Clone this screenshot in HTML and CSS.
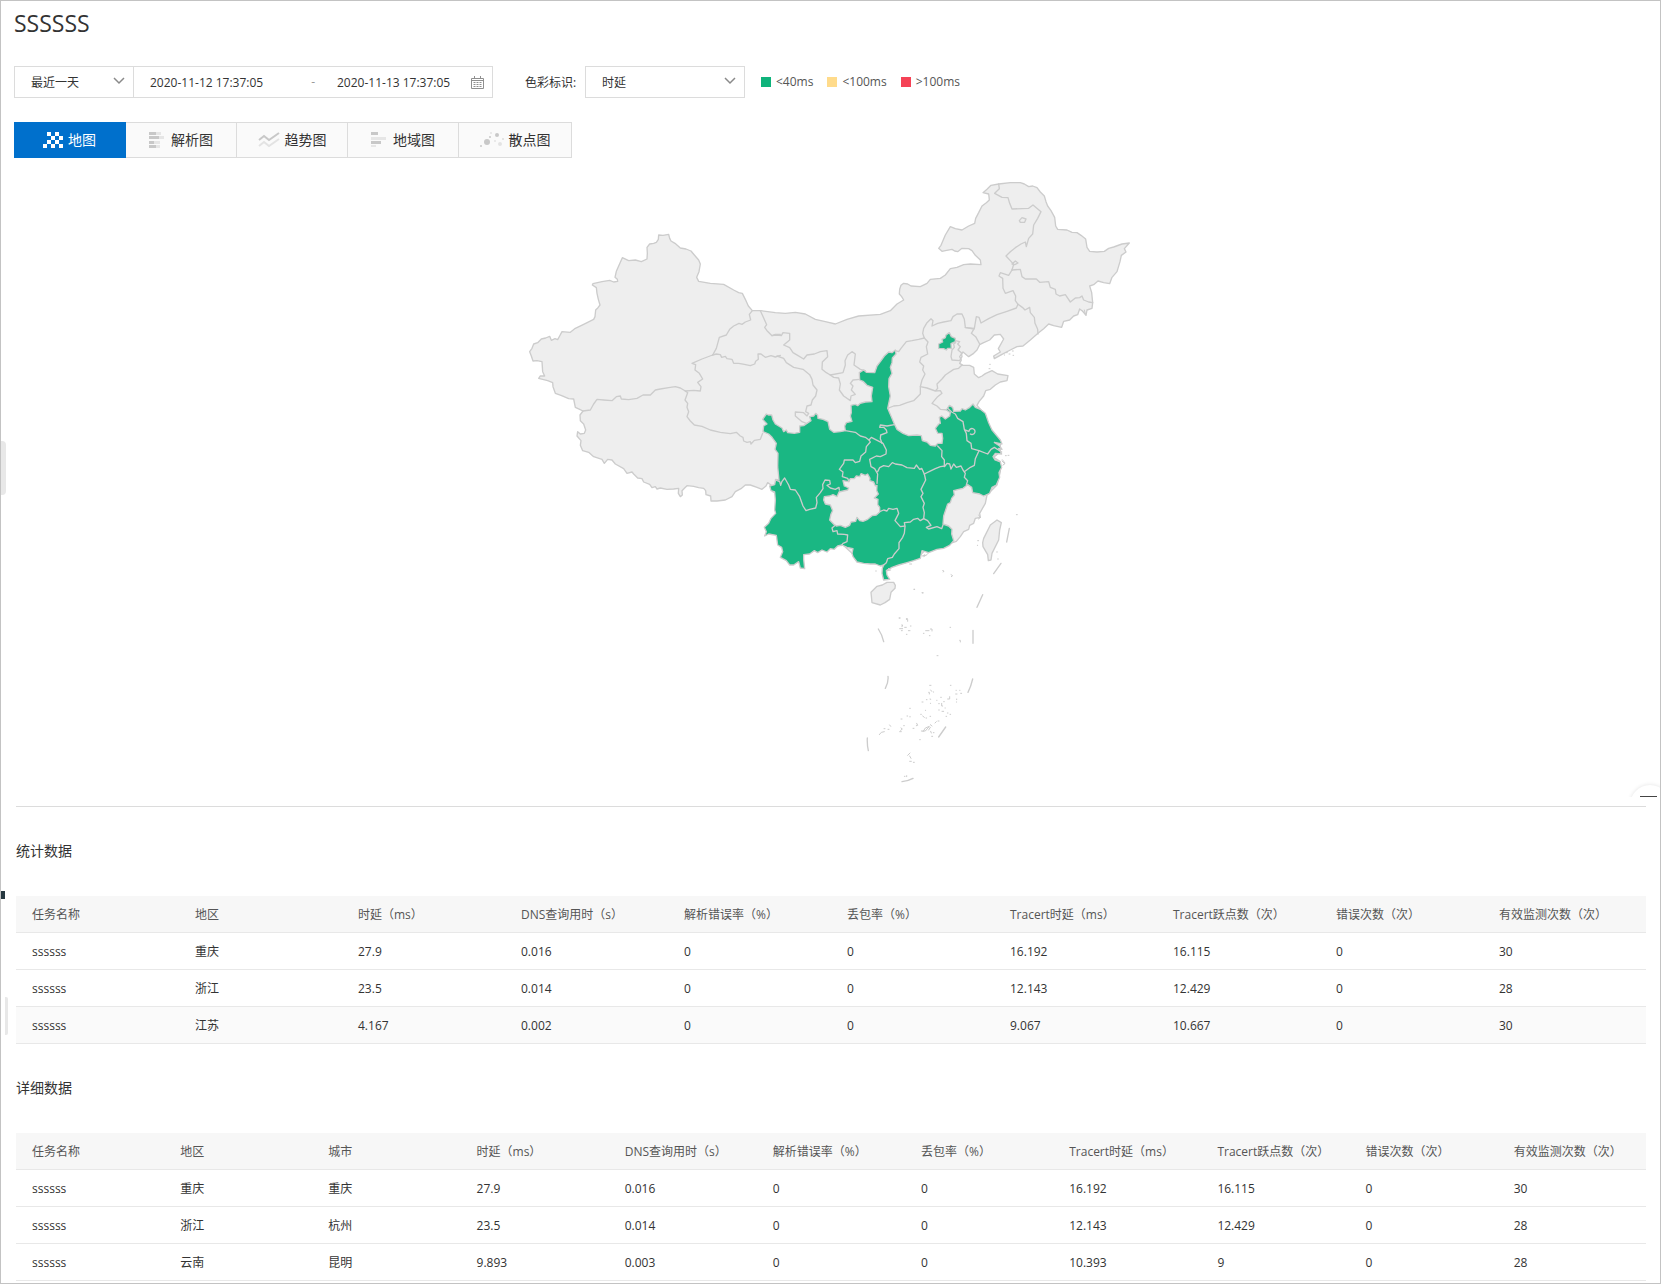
FILE: index.html
```html
<!DOCTYPE html>
<html lang="zh-CN">
<head>
<meta charset="utf-8">
<meta name="viewport" content="width=device-width, initial-scale=1">
<title>SSSSSS</title>
<link rel="stylesheet" href="styles.css">
</head>
<body>
<main class="page">
  <h1 class="page-title">SSSSSS</h1>

  <form class="filters">
    <div class="range">
      <div class="select-box range-preset">
        <select class="select" aria-label="时间范围"><option>最近一天</option></select>
        <svg class="chevron" viewBox="0 0 12 8" aria-hidden="true"><path d="M1 1l5 5 5-5"/></svg>
      </div>
      <input class="date date-from" type="text" aria-label="开始时间" value="2020-11-12 17:37:05">
      <span class="dash">-</span>
      <input class="date date-to" type="text" aria-label="结束时间" value="2020-11-13 17:37:05">
      <svg class="calendar" viewBox="0 0 13 13" aria-hidden="true"><path d="M.5 2.500h12v10h-12zM.5 4.500h12M3.500 0v3M9.500 0v3"/><path class="calendar-days" d="M2.500 6.500h8M2.500 8.500h8M2.500 10.500h8"/></svg>
    </div>
    <label class="metric-label" for="metric">色彩标识:</label>
    <div class="select-box metric">
      <select class="select" id="metric"><option>时延</option></select>
      <svg class="chevron" viewBox="0 0 12 8" aria-hidden="true"><path d="M1 1l5 5 5-5"/></svg>
    </div>
    <ul class="legend">
      <li><i class="swatch swatch-good"></i>&lt;40ms</li>
      <li><i class="swatch swatch-warn"></i>&lt;100ms</li>
      <li><i class="swatch swatch-bad"></i>&gt;100ms</li>
    </ul>
  </form>

  <nav class="tabs">
    <button class="tab tab-active" type="button">
      <svg width="20" height="16" viewBox="0 0 20 16" fill="#fff" aria-hidden="true"><path d="M4 0h4v4H4zM12 0h4v4h-4zM8 4h4v4H8zM16 4h4v4h-4zM4 8h4v4H4zM12 8h4v4h-4zM0 12h4v4H0zM8 12h4v4H8zM16 12h4v4h-4z"/></svg>
      地图
    </button>
    <button class="tab" type="button">
      <svg class="icon-wide" width="16" height="16" viewBox="0 0 16 16" aria-hidden="true"><path fill="#c8c8c8" d="M0 0h7v3H0zM0 4h10v3H0zM0 9h5v3H0zM0 13h7v3H0z"/><path fill="#e6e6e6" d="M7 0h5v3H7zM10 4h5v3h-5zM5 9h6v3H5zM7 13h4v3H7z"/></svg>
      解析图
    </button>
    <button class="tab" type="button">
      <svg width="22" height="16" viewBox="0 0 22 16" fill="none" stroke-width="2" aria-hidden="true"><path stroke="#c8c8c8" d="M1 8l5-4 5 4 10-7"/><path stroke="#e3e3e3" d="M1 14l5-4 5 4 10-7"/></svg>
      趋势图
    </button>
    <button class="tab" type="button">
      <svg class="icon-wide" width="16" height="16" viewBox="0 0 16 16" aria-hidden="true"><path fill="#c8c8c8" d="M0 0h7v3H0zM0 9h10v3H0z"/><path fill="#e6e6e6" d="M0 5h15v3H0zM0 13h5v2H0z"/></svg>
      地域图
    </button>
    <button class="tab" type="button">
      <svg width="24" height="16" viewBox="0 0 24 16" fill="#c8c8c8" aria-hidden="true"><circle cx="1" cy="14" r="1"/><circle cx="7" cy="10" r="3"/><circle cx="17" cy="3" r="2"/><circle cx="10" cy="5" r="1"/><circle cx="11" cy="1" r="1" fill="#e3e3e3"/><circle cx="15" cy="9" r="1" fill="#e3e3e3"/><circle cx="20" cy="12" r="2" fill="#e3e3e3"/><circle cx="23" cy="7" r="1" fill="#ddd"/></svg>
      散点图
    </button>
  </nav>

  <section class="map-panel">
    <svg class="map" viewBox="2 0 1860 1881" role="img" aria-label="中国地图">
      <!-- mainland outline -->
      <path class="land" d="M28 545L35 535L40 522L52 518L63 507L76 504L88 499L93 511L104 506L112 509L118 498L125 485L150 487L165 475L190 463L220 448L224 440L226 420L233 413L239 405L234 388L230 370L228 353L216 345L218 341L245 335L268 331L280 336L292 334L291 328L284 322L288 304L306 263L325 272L345 270L363 275L380 267L381 250L380 232L388 222L400 220L408 217L414 208L415 195L428 196L445 193L448 205L452 213L464 220L480 234L497 237L512 243L522 255L535 270L540 282L536 305L529 322L535 334L570 340L610 343L640 360L655 368L666 370L675 388L684 408L696 422L722 422L765 428L795 430L825 427L855 432L885 448L915 455L945 462L980 448L1015 438L1080 433L1110 422L1130 402L1150 390L1144 380L1137 372L1138 358L1142 346L1150 340L1162 342L1172 348L1200 350L1220 340L1230 328L1260 325L1275 315L1290 296L1310 292L1330 284L1350 282L1382 284L1380 270L1365 256L1355 242L1345 236L1325 235L1312 245L1303 243L1295 238L1275 242L1265 244L1255 235L1262 226L1275 195L1290 170L1305 176L1325 180L1345 168L1363 160L1366 145L1375 128L1385 108L1398 98L1407 90L1406 80L1405 72L1388 68L1400 58L1412 46L1435 42L1470 38L1500 38L1512 42L1525 50L1537 48L1550 53L1560 66L1572 78L1577 95L1582 108L1592 122L1603 142L1606 168L1612 178L1640 180L1655 187L1670 188L1682 196L1696 207L1700 232L1708 244L1730 246L1752 244L1765 235L1780 231L1805 222L1827 219L1812 236L1817 246L1803 256L1799 275L1790 305L1775 322L1768 341L1750 338L1733 333L1720 344L1708 348L1714 368L1717 398L1715 415L1700 420L1697 436L1687 424L1678 417L1672 434L1660 438L1648 450L1630 454L1624 472L1600 467L1585 462L1570 476L1553 490L1530 510L1508 528L1490 530L1470 540L1445 553L1422 566L1420 558L1440 546L1434 536L1450 507L1440 493L1422 495L1408 510L1390 518L1378 524L1370 540L1360 550L1345 560L1328 546L1318 560L1323 570L1318 580L1328 586L1348 586L1360 592L1362 612L1375 623L1385 618L1395 611L1415 602L1432 612L1463 617L1460 632L1440 636L1425 645L1410 658L1396 662L1390 678L1376 695L1370 706L1395 735L1405 765L1425 800L1440 818L1440 845L1420 862L1440 875L1440 905L1430 945L1400 975L1395 1000L1378 1030L1380 1042L1365 1045L1360 1060L1348 1066L1345 1078L1330 1085L1320 1100L1308 1114L1290 1120L1260 1135L1210 1145L1190 1165L1100 1190L1060 1180L1010 1175L995 1150L965 1122L890 1140L845 1150L790 1155L790 1120L775 1090L745 1080L770 1030L770 970L757 965L752 945L742 938L737 948L725 958L710 952L690 945L675 945L662 956L645 965L635 980L615 990L590 993L572 993L571 978L557 974L556 962L550 955L535 953L520 949L500 947L493 954L485 962L486 975L480 980L474 970L475 955L460 957L440 958L420 954L410 957L405 950L395 953L388 943L370 936L365 926L352 924L340 912L335 906L320 910L310 896L285 882L275 870L262 868L252 880L245 868L220 860L205 847L187 842L180 826L182 812L170 798L172 785L180 792L192 790L196 780L190 762L180 752L179 735L188 723L178 718L165 712L160 687L145 686L122 676L105 670L98 650L97 638L82 632L55 625L60 618L73 618L67 605L65 575L50 572L38 573L33 558Z"/>

      <!-- north-west borders -->
      <g class="border" transform="translate(0 150)">
        <path d="M696 272L687 283L691 300L675 306L665 313L656 310L640 318L628 328L618 345L597 352L588 385L577 405"/>
        <path d="M720 272L729 292L739 314L733 322L740 332L755 347L765 343L780 343"/>
        <path d="M577 405L588 402L600 404L604 412L615 409L620 416L635 418L640 430L655 430L672 433L690 437L703 432L706 424L714 418L713 402L722 402L735 412L752 407L765 411L780 406"/>
        <path d="M577 405L545 417L515 430L526 434L524 450L537 460L547 477L532 487L542 500L540 513L520 511L495 513"/>
        <path d="M495 513L480 504L465 500L445 503L420 507L405 510L390 525L368 525L350 535L325 539L303 537L300 528L288 530L275 542L250 540L230 538L220 552L210 570L188 573"/>
        <path d="M495 513L502 518L494 540L502 550L500 562L505 575L500 590L510 603L522 615L545 619L570 630L600 637L630 641L648 637L660 648L668 652L670 663L680 667L690 665L692 672L702 661L720 658L727 640"/>
      </g>

      <!-- north and central borders -->
      <g class="border" transform="translate(660 330)">
        <path d="M95 167L110 165L123 167L128 158L148 160L148 180L130 195L148 203L158 218L172 226L190 237L200 225L222 222L240 215L260 212L262 230L246 246L245 268L258 278L270 285"/>
        <path d="M270 285L308 278L315 255L314 242L322 225L335 215L345 222L341 255L360 268L375 272"/>
        <path d="M270 285L280 292L295 294L300 312L297 330L310 348L330 362L332 348L345 343L333 330L338 318L330 310L338 300L358 298"/>
        <path d="M110 228L130 235L138 248L160 262L188 268L208 284L215 298L218 315L230 330L226 348L216 360L212 375L200 378L196 395L205 400L200 408L190 398L165 396L165 408L185 425L198 430"/>
        <path d="M465 212L475 215L482 205L498 185L515 182L535 178L552 174L547 160L550 145L560 128L572 116L578 122L575 138L592 130L610 126L632 122L638 110L650 102L665 102L672 118L675 142L700 147"/>
        <path d="M552 174L563 186L558 200L562 222L542 232L538 246L550 258L547 270L554 282L545 300L540 320L540 342L520 362L500 368L478 376L460 378L442 385"/>
        <path d="M540 320L560 324L585 333L592 325L590 312L605 297L615 285L640 268L655 265L665 255M585 333L600 332L605 340L590 352L575 370L590 378L600 388L625 390"/>
      </g>

      <!-- north-east borders -->
      <g class="border" transform="translate(1140 0)">
        <path d="M195 473L222 475L213 490L226 500L238 522"/>
        <path d="M222 475L228 440L236 442L242 459L265 446L290 434L320 424L348 414L353 403L345 392L346 378L338 362L315 370L308 355L307 325L296 318L300 308L325 316L335 300"/>
        <path d="M335 300L340 283L330 272L317 258L330 245L345 233L362 222L375 216L378 230L385 205L397 192L400 165L412 145L422 125L398 105L385 115L335 117L328 100L323 83L305 82L283 70L297 56L295 42"/>
        <path d="M335 300L360 298L365 320L375 327L408 327L418 337L445 335L450 352L465 358L467 372L478 378L495 374L510 396L525 384L538 383L545 378L550 390L565 396L577 398"/>
        <path d="M352 402L366 412L374 420L388 412L390 428L402 442L404 460L412 478L413 492M357 152L365 143L377 147L373 157L360 157ZM335 282L345 273L353 279L343 284ZM166 518L160 522L162 532L155 540L152 560L155 570L178 572L185 560L183 548L173 540L180 530L172 522L178 515L165 512"/>
      </g>

      <!-- provinces with monitored latency below 40ms -->
      <path class="good" transform="translate(1140 0)" d="M147 488L153 500L165 505L165 515L152 521L153 535L142 535L138 540L130 536L115 535L115 522L127 516L125 508L135 503L137 495Z"/>
      <path class="good" transform="translate(660 330)" d="M78 402L84 405L94 405L98 420L105 432L125 444L130 455L138 450L142 458L162 460L178 457L178 438L190 437L203 428L212 422L208 410L220 408L226 400L232 406L233 415L248 418L263 425L268 448L280 457L300 455L315 452L313 438L318 428L335 424L330 408L333 398L332 376L345 373L352 377L360 370L375 366L395 365L393 348L397 322L380 316L368 304L358 300L357 278L370 270L378 277L403 278L410 258L420 245L432 228L445 216L455 218L465 210L467 222L456 234L455 248L450 262L455 280L446 296L445 320L450 348L442 385L452 408L462 432L470 448L488 460L505 467L530 465L543 467L546 482L560 486L570 496L585 498L592 490L605 490L607 475L605 460L592 460L585 445L595 432L600 430L597 412L604 408L615 417L628 408L630 398L618 390L627 376L637 382L640 394L660 393L665 386L675 390L688 382L698 372L705 382L720 388L735 400L745 428L755 450L770 468L780 480L785 492L762 487L778 498L785 508L775 505L784 522L765 520L758 530L764 540L780 546L784 562L776 578L778 592L768 615L755 622L748 640L730 648L718 642L697 638L694 622L682 614L668 625L655 628L640 632L642 645L634 655L630 668L622 672L616 690L610 708L608 732L625 738L635 748L634 762L640 782L628 796L610 805L590 808L565 818L545 812L540 835L520 842L500 848L475 855L455 862L438 872L440 885L448 898L430 900L425 880L426 865L430 855L420 858L405 852L390 852L370 850L350 846L338 830L335 820L338 806L320 802L305 795L292 798L282 808L270 806L260 816L245 810L232 818L222 812L208 822L190 824L190 838L193 866L180 864L175 845L160 855L148 855L138 842L120 832L127 815L124 802L112 795L108 766L85 762L73 768L78 755L72 742L85 730L92 715L106 700L103 690L105 660L103 636L92 632L88 618L103 614L106 598L116 600L112 560L113 520L104 508L108 490L95 472L85 462L68 455L70 438L80 432L67 418Z"/>

      <!-- Guizhou, Hainan and Taiwan -->
      <g class="land" transform="translate(660 690)">
        <path d="M308 242L325 245L330 236L342 236L348 228L358 230L362 221L375 226L382 222L389 235L388 242L400 246L405 258L410 256L409 272L414 282L402 294L413 298L412 314L418 322L418 336L408 345L395 347L382 358L368 364L358 362L350 352L346 364L332 366L328 376L315 382L300 376L288 378L282 374L268 360L272 342L277 332L270 315L255 312L250 300L252 290L268 288L278 284L290 290L296 276L322 270L325 264L312 258Z"/>
        <path d="M392 577L410 559L426 555L440 547L460 547L465 556L464 565L452 577L448 598L434 608L420 615L395 608Z"/>
        <path d="M770 360L783 368L778 390L775 420L755 460L752 480L744 482L742 464L728 440L727 428L730 415L750 375Z"/>
      </g>

      <!-- borders between the coloured provinces -->
      <g class="border" transform="translate(660 690)">
        <path d="M315 92L345 97L360 108L375 112L386 120L393 112L412 122L428 130L438 150L437 162L420 170L408 168L388 178L392 200L403 206L412 222L410 250"/>
        <path d="M425 130L420 116L421 105L440 98L438 90L430 82L418 82L420 75L440 78L462 74"/>
        <path d="M386 120L390 126L378 140L376 156L362 168L358 184L345 188L338 180L312 180L310 190L297 208L308 216L306 230L322 235L326 245"/>
        <path d="M412 215L418 203L430 197L445 200L456 188L465 192L485 195L500 203L522 205L528 195L538 208L544 205L552 222"/>
        <path d="M552 222L556 240L542 268L548 280L542 290L552 310L548 322L552 338L550 356"/>
        <path d="M418 335L430 330L440 333L445 325L458 328L470 325L475 340L464 362L480 380L494 378L492 368L510 366L520 358L532 355L540 362L550 356L562 362L572 376L558 382L565 387L590 380L604 386L608 375"/>
        <path d="M552 222L568 214L585 206L600 200L614 198L620 190L628 192L632 207L640 192L648 202L662 198L668 210L675 220L672 232L682 242L678 255M672 215L690 202L702 196L705 176L716 152"/>
        <path d="M592 138L605 152L604 170L612 180L612 200M622 25L634 36L645 42L652 55L668 65L672 88L678 100L680 122L692 130L694 146L716 152L742 162L752 148L762 142L784 156M674 90L686 94A9 9 0 1 1 690 102"/>
        <path d="M105 240L118 245L121 256L125 244L133 234L145 255L150 268L165 270L178 290L188 318L197 332L208 328L226 324L230 308L228 292L240 278L248 266L247 254L254 240L268 241L270 252L260 256L270 264L285 268L296 262L297 270"/>
        <path d="M283 377L275 384L278 395L290 392L292 402L312 403L322 405L320 425L308 430L303 437M494 380L492 400L487 412L476 428L476 446L462 462L456 472L442 476L438 488L430 495"/>
      </g>

      <!-- coastal islets -->
      <path class="islets" transform="translate(660 690)" d="M712 422h3M711 436h1M607 512l4 1-2 3M632 524l5 3-4 3M521 568h2M546 579h2M477 654h2M498 656h3M770 455v2M772 477h2M828 344h3M785 183l8 8-5 5 6-7-8-10M795 167h3M803 166h3M406 513h2M546 468l8-4-4 6 10-6 4-5M715 345l5 8-6 4M445 505l-6 8 12-3M508 492h6"/>
      <path class="islets" transform="translate(1140 0)" d="M318 548h3M326 552h3M336 543h3M312 555h1M338 556h2M268 583h2M266 596h3M545 422l10 10-3-12"/>

      <!-- South China Sea islands -->
      <path class="islets" transform="translate(990 1200)" d="M191 58h2M215 68h3M146 144h3M168 148h4v6M154 165h3l-2 5M148 176h9M163 172h5M174 182h5M180 168h2M153 182h3M168 193h2M219 190h2M226 182h10M240 177h5v6M237 197h2M299 172h2M328 211h2v5M260 257h3M238 346h4M241 360l3 4M235 367h2v5M249 366h1M228 389h2M239 387h2v1M215 396h3M240 400h1M259 391h1M271 382h2M280 395h2M292 387h6v-7M300 346h2M317 361h1M328 361h1M316 372h4M331 370h3M319 387v2M318 396h1M265 401h2M274 400v8h3M284 414h1M265 420h2M275 424h5M291 429h2M299 433h2M287 439h2M225 421h1M211 433h2M217 438l5 4M227 444h2M239 439h2M178 415h2M170 438h2M179 439v2M152 447h3M160 467h2M152 474l4 3-5 4M148 485h5M199 460l3 6-4 1M188 475h3M87 494l6-7 9-2M101 476h3M118 465l3 4M113 478h3M254 459l4-4M263 453h3M240 464l5 4M213 483h12l12-14-12 5-7 11M235 480l5-8M241 484l2 5M249 488h2M244 499h3M208 509h2M172 556l7-7M178 558l4 7M178 574h5M189 577h3M162 619h2M169 617v3"/>
      <path class="sea-dash" transform="translate(990 1200)" d="M397 74l-17 38M368 181v39M84 177q12 18 16 38M113 319q2 18-8 36M367 327q-5 22-14 40M286 471l-21 30M51 504q-1 20 3 38M155 635q18-2 33-10"/>
      <path class="sea-dash" transform="translate(660 690)" d="M807 385l-8 41M782 490l-22 31"/>
    </svg>
    <button class="zoom-out" type="button" aria-label="缩小"></button>
  </section>

  <hr class="rule">

  <h2 class="section-title">统计数据</h2>
  <table class="data">
    <thead>
      <tr><th>任务名称</th><th>地区</th><th>时延（ms）</th><th>DNS查询用时（s）</th><th>解析错误率（%）</th><th>丢包率（%）</th><th>Tracert时延（ms）</th><th>Tracert跃点数（次）</th><th>错误次数（次）</th><th>有效监测次数（次）</th></tr>
    </thead>
    <tbody>
      <tr><td>ssssss</td><td>重庆</td><td>27.9</td><td>0.016</td><td>0</td><td>0</td><td>16.192</td><td>16.115</td><td>0</td><td>30</td></tr>
      <tr><td>ssssss</td><td>浙江</td><td>23.5</td><td>0.014</td><td>0</td><td>0</td><td>12.143</td><td>12.429</td><td>0</td><td>28</td></tr>
      <tr class="row-hover"><td>ssssss</td><td>江苏</td><td>4.167</td><td>0.002</td><td>0</td><td>0</td><td>9.067</td><td>10.667</td><td>0</td><td>30</td></tr>
    </tbody>
  </table>

  <h2 class="section-title">详细数据</h2>
  <table class="data">
    <thead>
      <tr><th>任务名称</th><th>地区</th><th>城市</th><th>时延（ms）</th><th>DNS查询用时（s）</th><th>解析错误率（%）</th><th>丢包率（%）</th><th>Tracert时延（ms）</th><th>Tracert跃点数（次）</th><th>错误次数（次）</th><th>有效监测次数（次）</th></tr>
    </thead>
    <tbody>
      <tr><td>ssssss</td><td>重庆</td><td>重庆</td><td>27.9</td><td>0.016</td><td>0</td><td>0</td><td>16.192</td><td>16.115</td><td>0</td><td>30</td></tr>
      <tr><td>ssssss</td><td>浙江</td><td>杭州</td><td>23.5</td><td>0.014</td><td>0</td><td>0</td><td>12.143</td><td>12.429</td><td>0</td><td>28</td></tr>
      <tr><td>ssssss</td><td>云南</td><td>昆明</td><td>9.893</td><td>0.003</td><td>0</td><td>0</td><td>10.393</td><td>9</td><td>0</td><td>28</td></tr>
    </tbody>
  </table>

  <i class="edge edge-handle"></i>
  <i class="edge edge-mark"></i>
  <i class="edge edge-thumb"></i>
</main>
</body>
</html>
```

FILE: styles.css
```css
*, *::before, *::after {
  box-sizing: border-box;
}

body {
  margin: 0;
  background: #fff;
  color: #333;
  font-family: "Open Sans", "Noto Sans CJK SC", sans-serif;
  font-size: 12px;
  line-height: 20px;
}

button, input, select {
  margin: 0;
  border: 0;
  padding: 0;
  background: none;
  color: inherit;
  font: inherit;
}

.page {
  position: relative;
  min-height: 100vh;
  padding: 6px 14px 0 13px;
  border: 1px solid #c3c3c3;
}

.page-title {
  margin: 0 0 27px;
  font-size: 23px;
  font-weight: 400;
  line-height: 32px;
}

/* Filters */
.filters {
  display: flex;
  align-items: center;
  height: 32px;
  margin-bottom: 24px;
}

.range {
  display: flex;
  align-items: center;
  width: 479px;
  height: 32px;
  border: 1px solid #dcdcdc;
}

.select-box {
  position: relative;
  height: 32px;
}

.range-preset {
  width: 119px;
  height: 30px;
  border-right: 1px solid #dcdcdc;
}

.metric {
  width: 160px;
  border: 1px solid #dcdcdc;
}

.select {
  width: 100%;
  height: 100%;
  padding: 2px 0 0 16px;
  appearance: none;
}

.chevron {
  position: absolute;
  top: 50%;
  right: 8px;
  width: 12px;
  height: 8px;
  margin-top: -5px;
  fill: none;
  stroke: #8a8a8a;
  stroke-width: 1.5;
  pointer-events: none;
}

.date {
  width: 120px;
  height: 30px;
}

.date-from {
  margin-left: 16px;
}

.dash {
  flex: 1;
  padding-right: 22px;
  color: #999;
  text-align: right;
}

.date-to {
  margin-right: 14px;
}

.calendar {
  width: 13px;
  height: 13px;
  margin-right: 8px;
  fill: none;
  stroke: #8f8f8f;
}

.calendar-days {
  stroke-dasharray: 2 1;
}

.metric-label {
  width: 60px;
  margin-left: 32px;
  padding-top: 2px;
}

.legend {
  display: flex;
  gap: 14px;
  margin: 0 0 0 16px;
  padding: 0;
  color: #555;
  list-style: none;
}

.legend li {
  display: flex;
  align-items: center;
  gap: 5px;
}

.swatch {
  width: 10px;
  height: 10px;
}

.swatch-good {
  background: #0fb37b;
}

.swatch-warn {
  background: #ffdb8b;
}

.swatch-bad {
  background: #f54256;
}

/* View tabs */
.tabs {
  display: flex;
  margin-bottom: 12px;
}

.tab {
  display: flex;
  align-items: center;
  justify-content: center;
  gap: 5px;
  width: 111px;
  height: 36px;
  border: 1px solid #dcdcdc;
  border-left: 0;
  background: #fafafa;
  font-size: 14px;
}

.tab:last-child {
  width: 113px;
}

.tab-active {
  width: 112px;
  border-color: #0070cc;
  background: #0070cc;
  color: #fff;
}

.icon-wide {
  margin-right: 1px;
}

/* Map */
.map-panel {
  position: relative;
  display: flex;
  justify-content: center;
  margin-right: -14px;
  margin-left: -13px;
  overflow: hidden;
}

.map {
  width: 620px;
  max-width: 100%;
}

.land, .good {
  stroke: #ccc;
  stroke-width: 4;
  stroke-linejoin: round;
}

.land {
  fill: #eee;
}

.good {
  fill: #1ab783;
}

.border, .islets, .sea-dash {
  fill: none;
  stroke: #ccc;
  stroke-width: 4;
  stroke-linecap: round;
  stroke-linejoin: round;
}

.islets {
  stroke-width: 3;
}

.zoom-out {
  position: absolute;
  right: -10px;
  bottom: -29px;
  width: 40px;
  height: 41px;
  border-radius: 50%;
  box-shadow: 0 0 4px rgba(0, 0, 0, .12);
}

.zoom-out::before {
  content: "";
  position: absolute;
  top: 11px;
  left: 10px;
  width: 17px;
  height: 1px;
  background: #444;
}

.rule {
  height: 1px;
  margin: 9px 0 0 2px;
  border: 0;
  background: #dcdcdc;
}

/* Data tables */
.section-title {
  margin: 34px 0 35px 2px;
  font-size: 14px;
  font-weight: 400;
  line-height: 20px;
}

.data {
  width: calc(100% - 2px);
  margin-left: 2px;
  border-spacing: 0;
  table-layout: fixed;
}

.data th, .data td {
  height: 37px;
  padding: 9px 0 7px 16px;
  border-bottom: 1px solid #e8e8e8;
  font-weight: 400;
  text-align: left;
  white-space: nowrap;
}

.data th {
  background: #f7f7f7;
  color: #555;
}

.row-hover {
  background: #fafafa;
}

/* Page edge marks */
.edge {
  position: absolute;
  left: 0;
}

.edge-handle {
  top: 440px;
  width: 5px;
  height: 54px;
  border-radius: 0 4px 4px 0;
  background: #e8e8e8;
}

.edge-mark {
  top: 890px;
  width: 4px;
  height: 8px;
  background: #263840;
}

.edge-thumb {
  top: 996px;
  left: 4px;
  width: 3px;
  height: 38px;
  border-radius: 0 2px 2px 0;
  background: #e8e8e8;
}
```
